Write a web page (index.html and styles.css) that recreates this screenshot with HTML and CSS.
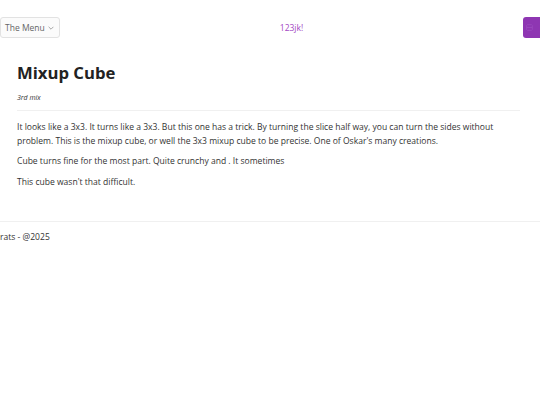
FILE: index.html
```html
<!DOCTYPE html>
<html lang="en">
<head>
<meta charset="utf-8">
<title>Mixup Cube</title>
<link rel="stylesheet" href="styles.css">
</head>
<body>
<header class="topbar">
  <button class="menu-btn">The Menu <svg class="chev" viewBox="0 0 10 6" width="6" height="4"><path d="M1 1l4 4 4-4" fill="none" stroke="#888" stroke-width="1.2"/></svg></button>
  <span class="brand">123jk!</span>
  <button class="action-btn" aria-label="toggle"><svg viewBox="0 0 10 10" width="7" height="7"><rect x="1" y="1" width="8" height="8" rx="1" fill="none" stroke="#9c4cc0" stroke-width="1"/><path d="M1 5h8" stroke="#9c4cc0" stroke-width="1"/></svg></button>
</header>
<main class="content">
  <h1 class="title">Mixup Cube</h1>
  <p class="subtitle">3rd mix</p>
  <hr class="rule">
  <p class="text">It looks like a 3x3. It turns like a 3x3. But this one has a trick. By turning the slice half way, you can turn the sides without problem. This is the mixup cube, or well the 3x3 mixup cube to be precise. One of Oskar's many creations.</p>
  <p class="text">Cube turns fine for the most part. Quite crunchy and . It sometimes</p>
  <p class="text">This cube wasn't that difficult.</p>
</main>
<footer class="footer">rats - @2025</footer>
</body>
</html>
```
FILE: styles.css
```css
html, body {
  margin: 0;
  padding: 0;
  background: #fff;
  overflow-x: hidden;
}
body {
  font-family: "Open Sans", "Noto Sans", sans-serif;
  color: #333;
  font-size: 8.55px;
}
.topbar {
  display: flex;
  justify-content: space-between;
  align-items: center;
  padding-top: 17px;
  margin-right: -13px;
}
.menu-btn {
  height: 21px;
  width: 60px;
  box-sizing: border-box;
  border: 1px solid #e2e2e2;
  border-radius: 3px;
  background: #fbfbfb;
  font-family: inherit;
  font-size: 8.5px;
  color: #666;
  padding: 0 4px;
  display: flex;
  align-items: center;
  gap: 3px;
}
.chev { display: block; }
.brand {
  color: #a448c4;
  font-size: 8.5px;
}
.action-btn {
  width: 30px;
  height: 21px;
  border: none;
  border-radius: 3px;
  background: #8e36b2;
  display: flex;
  align-items: center;
  justify-content: flex-start;
  padding: 0 3px;
}
.content {
  padding: 0 20px 0 17px;
  margin-top: 24px;
}
.title {
  font-size: 16.7px;
  font-weight: 700;
  color: #222;
  margin: 0;
  line-height: 22px;
}
.subtitle {
  font-size: 7px;
  font-style: italic;
  color: #333;
  margin: 9px 0 0;
  line-height: 9px;
}
.rule {
  border: none;
  border-top: 1px solid #f0f0f0;
  margin: 8px 0 10px;
}
.text {
  margin: 0 0 7px;
  line-height: 13.5px;
  font-size: 8.55px;
}
.footer {
  margin-top: 32px;
  border-top: 1px solid #f0f0f0;
  padding-top: 9px;
  font-size: 8.55px;
}
```
